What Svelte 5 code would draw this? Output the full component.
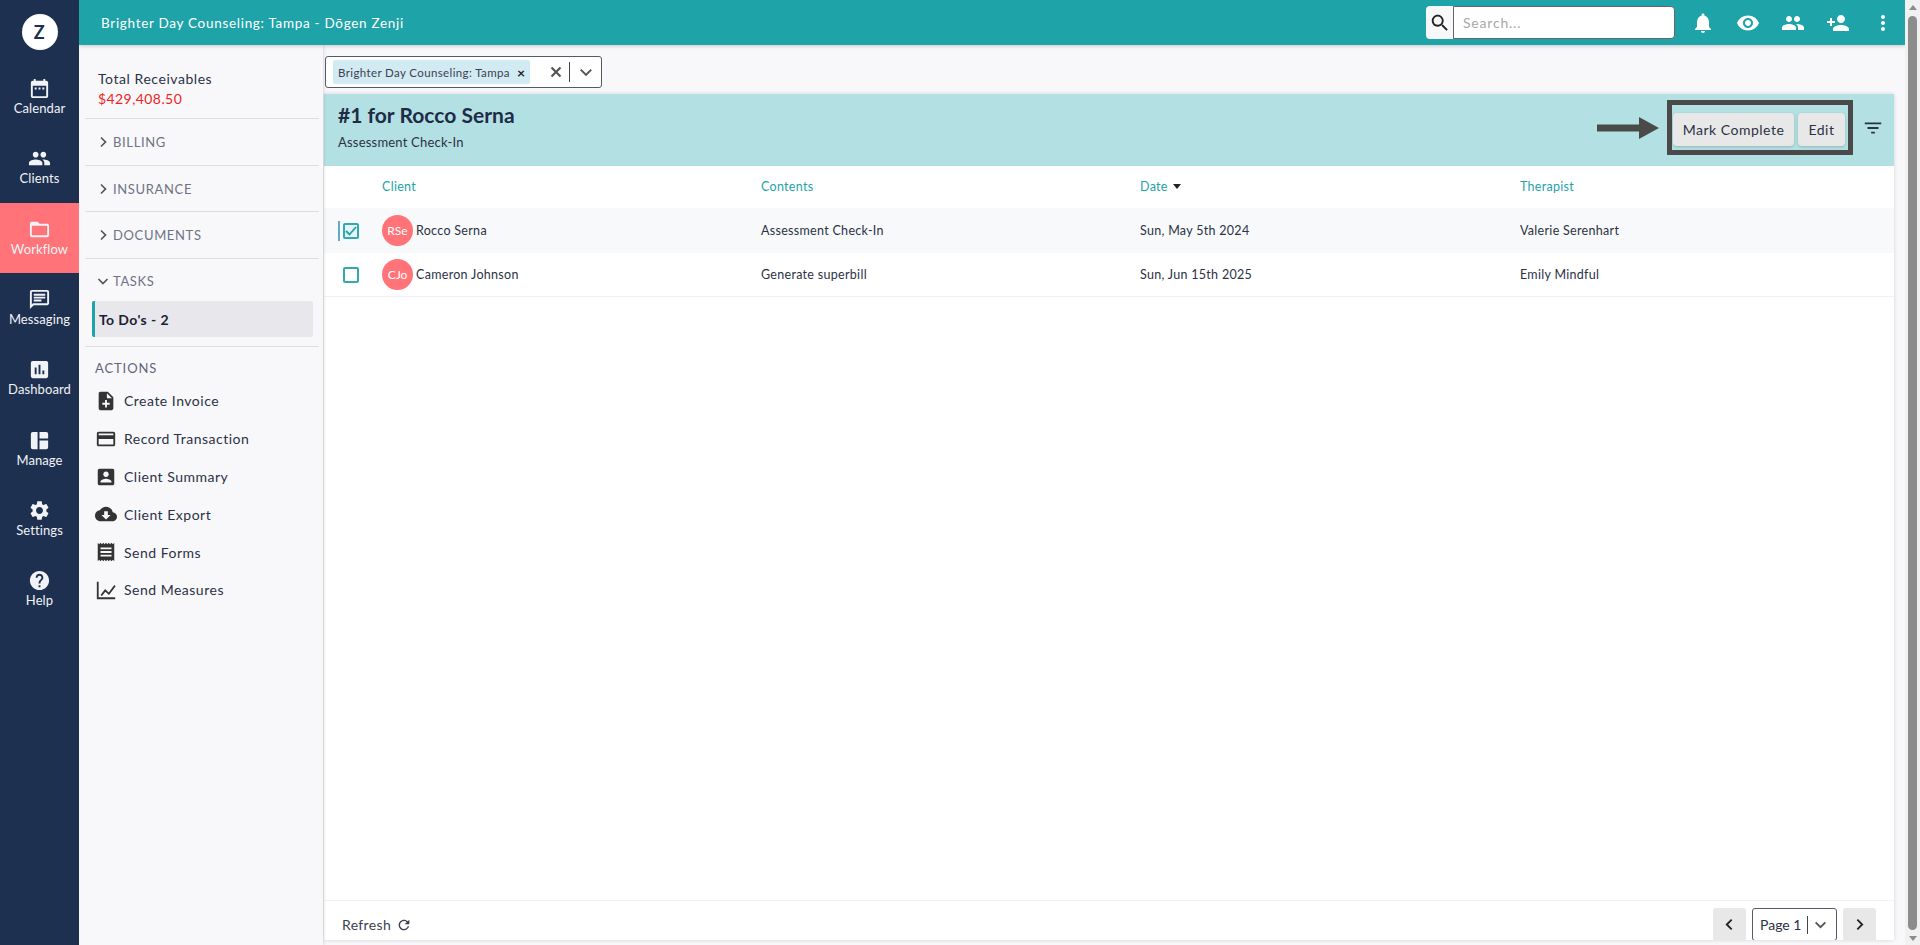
<script>
  const P = {
    calendar: "M19 4h-1V2h-2v2H8V2H6v2H5c-1.1 0-2 .9-2 2v14c0 1.1.9 2 2 2h14c1.1 0 2-.9 2-2V6c0-1.1-.9-2-2-2zm0 16H5V9h14zM7 11h2v2H7zm4 0h2v2h-2zm4 0h2v2h-2z",
    people: "M16 11c1.66 0 2.99-1.34 2.99-3S17.66 5 16 5c-1.66 0-3 1.34-3 3s1.34 3 3 3zm-8 0c1.66 0 2.99-1.34 2.99-3S9.66 5 8 5C6.34 5 5 6.34 5 8s1.34 3 3 3zm0 2c-2.33 0-7 1.17-7 3.5V19h14v-2.5c0-2.33-4.67-3.5-7-3.5zm8 0c-.29 0-.62.02-.97.05 1.16.84 1.97 1.97 1.97 3.45V19h6v-2.5c0-2.33-4.67-3.5-7-3.5z",
    folder: "M20 6h-8l-2-2H4c-1.1 0-1.99.9-1.99 2L2 18c0 1.1.9 2 2 2h16c1.1 0 2-.9 2-2V8c0-1.1-.9-2-2-2zm0 12H4V8h16v10z",
    message: "M20 2H4c-1.1 0-1.99.9-1.99 2L2 22l4-4h14c1.1 0 2-.9 2-2V4c0-1.1-.9-2-2-2zm0 14H5.17L4 17.17V4h16v12zM6 12h8v2H6zm0-3h12v2H6zm0-3h12v2H6z",
    chart: "M19 3H5c-1.1 0-2 .9-2 2v14c0 1.1.9 2 2 2h14c1.1 0 2-.9 2-2V5c0-1.1-.9-2-2-2zM9 17H7v-7h2v7zm4 0h-2V7h2v10zm4 0h-2v-4h2v4z",
    manage: "M5 3h5v18H5a2 2 0 0 1-2-2V5a2 2 0 0 1 2-2zM12 3h7a2 2 0 0 1 2 2v5h-9zM12 12h9v7a2 2 0 0 1-2 2h-7z",
    settings: "M19.14 12.94c.04-.3.06-.61.06-.94 0-.32-.02-.64-.07-.94l2.03-1.58c.18-.14.23-.41.12-.61l-1.92-3.32c-.12-.22-.37-.29-.59-.22l-2.39.96c-.5-.38-1.03-.7-1.62-.94l-.36-2.54c-.04-.24-.24-.41-.48-.41h-3.84c-.24 0-.43.17-.47.41l-.36 2.54c-.59.24-1.13.57-1.62.94l-2.39-.96c-.22-.08-.47 0-.59.22L2.74 8.87c-.12.21-.08.47.12.61l2.03 1.58c-.05.3-.09.63-.09.94s.02.64.07.94l-2.03 1.58c-.18.14-.23.41-.12.61l1.92 3.32c.12.22.37.29.59.22l2.39-.96c.5.38 1.03.7 1.62.94l.36 2.54c.05.24.24.41.48.41h3.84c.24 0 .44-.17.47-.41l.36-2.54c.59-.24 1.13-.56 1.62-.94l2.39.96c.22.08.47 0 .59-.22l1.92-3.32c.12-.22.07-.47-.12-.61l-2.01-1.58zM12 15.6c-1.98 0-3.6-1.62-3.6-3.6s1.62-3.6 3.6-3.6 3.6 1.62 3.6 3.6-1.62 3.6-3.6 3.6z",
    help: "M12 2C6.48 2 2 6.48 2 12s4.48 10 10 10 10-4.48 10-10S17.52 2 12 2zm1 17h-2v-2h2v2zm2.07-7.75l-.9.92C13.45 12.9 13 13.5 13 15h-2v-.5c0-1.1.45-2.1 1.17-2.83l1.24-1.26c.37-.36.59-.86.59-1.41 0-1.1-.9-2-2-2s-2 .9-2 2H8c0-2.21 1.79-4 4-4s4 1.79 4 4c0 .88-.36 1.68-.93 2.25z",
    noteAdd: "M14 2H6c-1.1 0-1.99.9-1.99 2L4 20c0 1.1.89 2 1.99 2H18c1.1 0 2-.9 2-2V8l-6-6zm2 14h-3v3h-2v-3H8v-2h3v-3h2v3h3v2zm-3-7V3.5L18.5 9H13z",
    card: "M20 4H4c-1.11 0-1.99.89-1.99 2L2 18c0 1.11.89 2 2 2h16c1.11 0 2-.89 2-2V6c0-1.11-.89-2-2-2zm0 14H4v-6h16v6zm0-10H4V6h16v2z",
    account: "M3 5v14c0 1.1.89 2 2 2h14c1.1 0 2-.9 2-2V5c0-1.1-.9-2-2-2H5c-1.11 0-2 .9-2 2zm12 4c0 1.66-1.34 3-3 3s-3-1.34-3-3 1.34-3 3-3 3 1.34 3 3zm-9 8c0-2 4-3.1 6-3.1s6 1.1 6 3.1v1H6v-1z",
    cloud: "M19.35 10.04C18.67 6.59 15.64 4 12 4 9.11 4 6.6 5.64 5.35 8.04 2.34 8.36 0 10.91 0 14c0 3.31 2.69 6 6 6h13c2.76 0 5-2.24 5-5 0-2.64-2.05-4.78-4.65-4.96zM17 13l-5 5-5-5h3V9h4v4h3z",
    receipt: "M18 17H6v-2h12v2zm0-4H6v-2h12v2zm0-4H6V7h12v2zM3 22l1.5-1.5L6 22l1.5-1.5L9 22l1.5-1.5L12 22l1.5-1.5L15 22l1.5-1.5L18 22l1.5-1.5L21 22V2l-1.5 1.5L18 2l-1.5 1.5L15 2l-1.5 1.5L12 2l-1.5 1.5L9 2 7.5 3.5 6 2 4.5 3.5 3 2v20z",
    measures: "M2 3h2v17h18v2H2zM6 17.4l5-6.4 4 3.6 6-8 1.5 1.2-7.2 9.6-4-3.6-3.7 4.8z",
    search: "M15.5 14h-.79l-.28-.27C15.41 12.59 16 11.11 16 9.5 16 5.91 13.09 3 9.5 3S3 5.91 3 9.5 5.91 16 9.5 16c1.61 0 3.09-.59 4.23-1.57l.27.28v.79l5 4.99L20.49 19l-4.99-5zm-6 0C7.01 14 5 11.99 5 9.5S7.01 5 9.5 5 14 7.01 14 9.5 11.99 14 9.5 14z",
    bell: "M12 22c1.1 0 2-.9 2-2h-4c0 1.1.89 2 2 2zm6-6v-5c0-3.07-1.64-5.64-4.5-6.32V4c0-.83-.67-1.5-1.5-1.5s-1.5.67-1.5 1.5v.68C7.63 5.36 6 7.92 6 11v5l-2 2v1h16v-1l-2-2z",
    eye: "M12 4.5C7 4.5 2.73 7.61 1 12c1.73 4.39 6 7.5 11 7.5s9.27-3.11 11-7.5c-1.73-4.39-6-7.5-11-7.5zM12 17c-2.76 0-5-2.24-5-5s2.24-5 5-5 5 2.24 5 5-2.24 5-5 5zm0-8c-1.66 0-3 1.34-3 3s1.34 3 3 3 3-1.34 3-3-1.34-3-3-3z",
    personAdd: "M15 12c2.21 0 4-1.79 4-4s-1.79-4-4-4-4 1.79-4 4 1.79 4 4 4zm-9-2V7H4v3H1v2h3v3h2v-3h3v-2H6zm9 4c-2.67 0-8 1.34-8 4v2h16v-2c0-2.66-5.33-4-8-4z",
    more: "M12 8c1.1 0 2-.9 2-2s-.9-2-2-2-2 .9-2 2 .9 2 2 2zm0 2c-1.1 0-2 .9-2 2s.9 2 2 2 2-.9 2-2-.9-2-2-2zm0 6c-1.1 0-2 .9-2 2s.9 2 2 2 2-.9 2-2-.9-2-2-2z",
    filter: "M10 18h4v-2h-4v2zM3 6v2h18V6H3zm3 7h12v-2H6v2z",
    refresh: "M17.65 6.35C16.2 4.9 14.21 4 12 4c-4.42 0-7.99 3.58-7.99 8s3.57 8 7.99 8c3.73 0 6.84-2.55 7.73-6h-2.08c-.82 2.33-3.04 4-5.65 4-3.31 0-6-2.69-6-6s2.69-6 6-6c1.66 0 3.14.69 4.22 1.78L13 11h7V4l-2.35 2.35z"
  };
  const nav = [
    ["Calendar", P.calendar], ["Clients", P.people], ["Workflow", P.folder, true], ["Messaging", P.message],
    ["Dashboard", P.chart], ["Manage", P.manage], ["Settings", P.settings], ["Help", P.help]
  ];
  const sections = ["BILLING", "INSURANCE", "DOCUMENTS"];
  const actions = [
    ["Create Invoice", P.noteAdd], ["Record Transaction", P.card], ["Client Summary", P.account],
    ["Client Export", P.cloud], ["Send Forms", P.receipt], ["Send Measures", P.measures]
  ];
  const rows = [
    { ini: "RSe", name: "Rocco Serna", what: "Assessment Check-In", date: "Sun, May 5th 2024", th: "Valerie Serenhart", on: true },
    { ini: "CJo", name: "Cameron Johnson", what: "Generate superbill", date: "Sun, Jun 15th 2025", th: "Emily Mindful", on: false }
  ];
  const topIcons = [P.bell, P.eye, P.people, P.personAdd, P.more];
</script>

{#snippet icon(d, size)}
  <svg width={size} height={size} viewBox="0 0 24 24" fill="currentColor" aria-hidden="true"><path d={d} /></svg>
{/snippet}
{#snippet chev(dir, size)}
  <svg width={size} height={size} viewBox="0 0 12 12" fill="none" stroke="currentColor" stroke-width="1.7" aria-hidden="true">
    {#if dir === "right"}<path d="M4 1.5 8.5 6 4 10.5" />{:else if dir === "left"}<path d="M8 1.5 3.5 6 8 10.5" />{:else}<path d="M1.5 4 6 8.5 10.5 4" />{/if}
  </svg>
{/snippet}

<div class="page">
  <nav class="rail">
    <div class="logo-wrap"><div class="logo">Z</div></div>
    {#each nav as [label, d, active]}
      <div class="rail-item" class:active>
        {@render icon(d, 23)}
        <span>{label}</span>
      </div>
    {/each}
  </nav>

  <div class="main">
    <header class="top">
      <div class="title">Brighter Day Counseling: Tampa - Dōgen Zenji</div>
      <div class="search">
        <div class="search-btn">{@render icon(P.search, 22)}</div>
        <div class="search-input">Search...</div>
      </div>
      <div class="top-icons">
        {#each topIcons as d}{@render icon(d, 24)}{/each}
      </div>
    </header>

    <div class="body">
      <aside class="side">
        <div class="recv">
          <div>Total Receivables</div>
          <div class="amount">$429,408.50</div>
        </div>
        {#each sections as s}
          <div class="sec">{@render chev("right", 12)}<span>{s}</span></div>
        {/each}
        <div class="sec open">{@render chev("down", 12)}<span>TASKS</span></div>
        <div class="todo-wrap"><div class="todo">To Do's - 2</div></div>
        <div class="actions">
          <div class="act-title">ACTIONS</div>
          {#each actions as [label, d]}
            <div class="act">{@render icon(d, 22)}<span>{label}</span></div>
          {/each}
        </div>
      </aside>

      <main class="content">
        <div class="select">
          <div class="chip"><span>Brighter Day Counseling: Tampa</span><b>×</b></div>
          <div class="sel-x">
            <svg width="12" height="12" viewBox="0 0 12 12" stroke="#555" stroke-width="2.2"><path d="M1.5 1.5l9 9M10.5 1.5l-9 9" /></svg>
          </div>
          <i class="sep"></i>
          <div class="sel-c">{@render chev("down", 14)}</div>
        </div>

        <section class="card">
          <div class="head">
            <div class="head-text">
              <h1>#1 for Rocco Serna</h1>
              <p>Assessment Check-In</p>
            </div>
            <div class="arrow">
              <svg width="62" height="24" viewBox="0 0 62 24"><path d="M0 8.5h42V1l20 11-20 11v-7.500H0z" fill="#4a4a4a" /></svg>
            </div>
            <div class="frame">
              <button>Mark Complete</button>
              <button>Edit</button>
            </div>
            <div class="filter">{@render icon(P.filter, 22)}</div>
          </div>

          <div class="tr th">
            <div></div>
            <div>Client</div>
            <div>Contents</div>
            <div class="sort">Date <i></i></div>
            <div>Therapist</div>
          </div>
          {#each rows as r}
            <div class="tr row" class:on={r.on}>
              <div class="chk-cell">
                <span class="box">
                  {#if r.on}<svg width="12" height="10" viewBox="0 0 12 10" fill="none" stroke="#1fa3a8" stroke-width="1.8"><path d="M1 5l3.5 3.5L11 1" /></svg>{/if}
                </span>
              </div>
              <div class="client"><span class="avatar">{r.ini}</span>{r.name}</div>
              <div>{r.what}</div>
              <div>{r.date}</div>
              <div>{r.th}</div>
            </div>
          {/each}

          <div class="spacer"></div>
          <div class="foot">
            <div class="refresh">Refresh {@render icon(P.refresh, 16)}</div>
            <div class="pager">
              <div class="pg">{@render chev("left", 13)}</div>
              <div class="pg-sel"><span>Page 1</span><i class="sep"></i>{@render chev("down", 13)}</div>
              <div class="pg">{@render chev("right", 13)}</div>
            </div>
          </div>
        </section>
      </main>
    </div>
  </div>

  <div class="scroll">
    <i class="up"></i>
    <div class="thumb"></div>
    <i class="down"></i>
  </div>
</div>

<style>
  :global(body) { margin: 0; overflow: hidden; }
  .page {
    display: flex; height: 945px; width: 1920px; overflow: hidden;
    font-family: Lato, "Liberation Sans", sans-serif; font-size: 14px; color: #2b3245;
    letter-spacing: .5px; background: #f8f8fb;
  }
  .rail { width: 79px; flex: none; background: #1e3050; color: #fff; position: relative; z-index: 3; }
  .logo-wrap { height: 62px; display: flex; justify-content: center; padding-top: 14px; box-sizing: border-box; }
  .logo {
    width: 36px; height: 36px; border-radius: 50%; background: #fff; color: #1e3050;
    display: flex; align-items: center; justify-content: center; font: 700 18px Lato, sans-serif;
  }
  .rail-item {
    height: 70.3px; display: flex; flex-direction: column; align-items: center; justify-content: center;
    gap: 0; font-size: 13px; letter-spacing: .1px; color: #f1f3f6; box-sizing: border-box; padding-bottom: 1px;
  }
  .rail-item span { line-height: 16px; }
  .rail-item.active { background: #ff7379; }

  .main { flex: 1; min-width: 0; display: flex; flex-direction: column; }
  .top {
    height: 45px; flex: none; background: #1ea3a8; color: #fff; display: flex; align-items: center;
    box-shadow: 0 1px 4px rgba(0,0,0,.2); position: relative; z-index: 2;
  }
  .title { padding-left: 22px; flex: 1; letter-spacing: .7px; font-size: 13.5px; }
  .search { display: flex; height: 33px; width: 249px; margin-right: 16px; color: #222; }
  .search-btn {
    width: 27px; background: #f8f8fb; border-radius: 4px 0 0 4px; display: flex; align-items: center; justify-content: center;
  }
  .search-input {
    flex: 1; background: #fff; border: 1px solid #666; border-radius: 0 4px 4px 0; color: #a8a8a8;
    padding-left: 9px; display: flex; align-items: center; font-size: 14px; letter-spacing: .8px;
  }
  .top-icons { display: flex; gap: 21px; padding-right: 10px; }

  .body { flex: 1; display: flex; min-height: 0; }
  .side {
    width: 244px; flex: none; padding: 24px 4px 0 6px; box-sizing: border-box; background: #f8f8fb;
    box-shadow: 1px 0 3px rgba(0,0,0,.12); position: relative;
  }
  .recv { padding: 0 0 9px 13px; border-bottom: 1px solid #dcdce2; line-height: 20px; color: #2b3245; letter-spacing: .55px; }
  .amount { color: #f0231c; font-size: 14px; letter-spacing: .42px; }
  .sec {
    height: 46.7px; box-sizing: border-box; display: flex; align-items: center; gap: 4px; padding-left: 12px;
    border-bottom: 1px solid #dcdce2; color: #6e7383; font-size: 13px; letter-spacing: .65px;
  }
  .sec :global(svg) { color: #555; }
  .sec.open { border: 0; height: 42px; padding-top: 2px; }
  .todo-wrap { padding: 0 6px 9px 7px; border-bottom: 1px solid #dcdce2; }
  .todo {
    height: 36px; background: #e8e8ec; border-left: 3px solid #1ea3a8; border-radius: 2px; display: flex; align-items: center;
    padding-left: 4px; font-weight: 700; color: #1c2233; letter-spacing: .4px;
  }
  .actions { padding: 11px 0 0 10px; }
  .act-title { color: #5f6679; font-size: 13px; letter-spacing: .9px; line-height: 20px; margin-bottom: 4px; }
  .act { height: 37.8px; display: flex; align-items: center; gap: 7px; color: #2b3245; }
  .act :global(svg) { color: #333; }

  .content { flex: 1; min-width: 0; padding: 11px 11px 5px 1px; display: flex; flex-direction: column; box-sizing: border-box; overflow: hidden; }
  .select {
    width: 277px; height: 32px; flex: none; box-sizing: border-box; border: 1px solid #555a66; border-radius: 3px; background: #fff;
    display: flex; align-items: center; padding: 0 0 0 7px; margin-bottom: 6px; margin-left: 1px;
  }
  .chip {
    background: #d2eaf2; height: 24px; display: flex; align-items: center; padding: 0 5px; gap: 7px;
    font-size: 11.5px; letter-spacing: .38px; color: #3c4152; border-radius: 2px;
  }
  .chip b { font-size: 14px; color: #222; }
  .sel-x { margin-left: auto; display: flex; padding-right: 7px; }
  .sep { width: 1px; height: 20px; background: #444; display: block; }
  .sel-c { width: 31px; display: flex; justify-content: center; color: #555; }

  .card { flex: 1; min-height: 0; background: #fff; display: flex; flex-direction: column; box-shadow: 0 0 4px rgba(0,0,0,.15); }
  .head {
    height: 72px; flex: none; box-sizing: border-box; background: #b3e0e2; display: flex; align-items: center;
    padding: 0 10px 5px 14px;
  }
  .head-text { flex: 1; align-self: flex-start; padding-top: 8px; }
  h1 { margin: 0; font-size: 21px; font-weight: 700; letter-spacing: .02px; color: #1e2c47; line-height: 26px; padding-bottom: 6px; }
  .head p { margin: 0; font-size: 13px; color: #2b3245; letter-spacing: .2px; line-height: 16px; }
  .arrow { display: flex; margin-right: 8px; }
  .frame {
    box-sizing: border-box; width: 186px; height: 55px; border: 5px solid #4a4a4a; display: flex; gap: 4px;
    padding: 8px 0 0 1px;
  }
  button {
    height: 33px; border: 0; border-radius: 4px; background: #e8e8e8; font: inherit; color: #2b3245; letter-spacing: .5px;
    box-shadow: 0 1px 3px rgba(0,0,0,.18); padding: 0; width: 121px;
  }
  button + button { width: 47px; }
  .filter { margin-left: 9px; display: flex; color: #2b3245; }

  .tr {
    display: grid; grid-template-columns: 58px 379px 379px 380px 1fr; align-items: center; flex: none; font-size: 12.5px; letter-spacing: .3px;
  }
  .th { height: 42px; color: #1ea3a8; box-sizing: border-box; padding-bottom: 1px; }
  .sort i { display: inline-block; width: 0; height: 0; border: 4.5px solid transparent; border-top: 5px solid #222; border-bottom: 0; margin: 0 0 2px 2px; }
  .row { height: 44px; color: #2b3245; border-bottom: 1px solid #f2f2f4; box-sizing: border-box; }
  .row.on { background: #f8f9fb; height: 45px; border: 0; }
  .chk-cell { padding-left: 15px; display: flex; align-items: center; position: relative; }
  .row.on .chk-cell::before { content: ""; position: absolute; left: 14px; top: 50%; margin-top: -10px; width: 2px; height: 20px; background: #62a8cf; }
  .box {
    width: 12px; height: 12px; border: 2px solid #33a9ad; border-radius: 2px; margin-left: 4px; background: #fff;
    display: flex; align-items: center; justify-content: center;
  }
  .row.on .box { background: #e6f4f7; }
  .client { display: flex; align-items: center; gap: 3px; }
  .avatar {
    width: 31px; height: 31px; border-radius: 50%; background: #ff7379; color: #fff; font-size: 12px; letter-spacing: 0;
    display: flex; align-items: center; justify-content: center; flex: none;
  }
  .spacer { flex: 1; }
  .foot {
    height: 40px; flex: none; box-sizing: border-box; overflow: hidden; border-top: 1px solid #f2f2f4; display: flex; align-items: flex-start; justify-content: space-between;
    padding: 7px 18px 0 18px;
  }
  .refresh { display: flex; align-items: center; gap: 5px; height: 33px; font-size: 14px; color: #3a3f4f; letter-spacing: .35px; }
  .pager { display: flex; gap: 6px; }
  .pg { width: 33px; height: 33px; background: #e8e8e8; border-radius: 3px; display: flex; align-items: center; justify-content: center; color: #222; }
  .pg-sel {
    width: 85px; height: 33px; box-sizing: border-box; border: 1px solid #555a66; border-radius: 3px; display: flex; align-items: center; gap: 6px;
    padding-left: 7px; color: #555; font-size: 14px;
  }
  .pg-sel span { color: #2b3245; letter-spacing: 0; }
  .pg-sel .sep { height: 18px; }

  .scroll { width: 15px; flex: none; background: #f1f1f1; display: flex; flex-direction: column; align-items: center; position: relative; z-index: 4; }
  .thumb { width: 9px; flex: 1; background: #8c8c8c; border-radius: 5px; margin: 6px 0 6px; }
  .up, .down { width: 0; height: 0; border: 4.5px solid transparent; display: block; flex: none; }
  .up { border-bottom: 5px solid #8c8c8c; border-top: 0; margin-top: 5px; }
  .down { border-top: 5px solid #8c8c8c; border-bottom: 0; margin-bottom: 4px; }
</style>
